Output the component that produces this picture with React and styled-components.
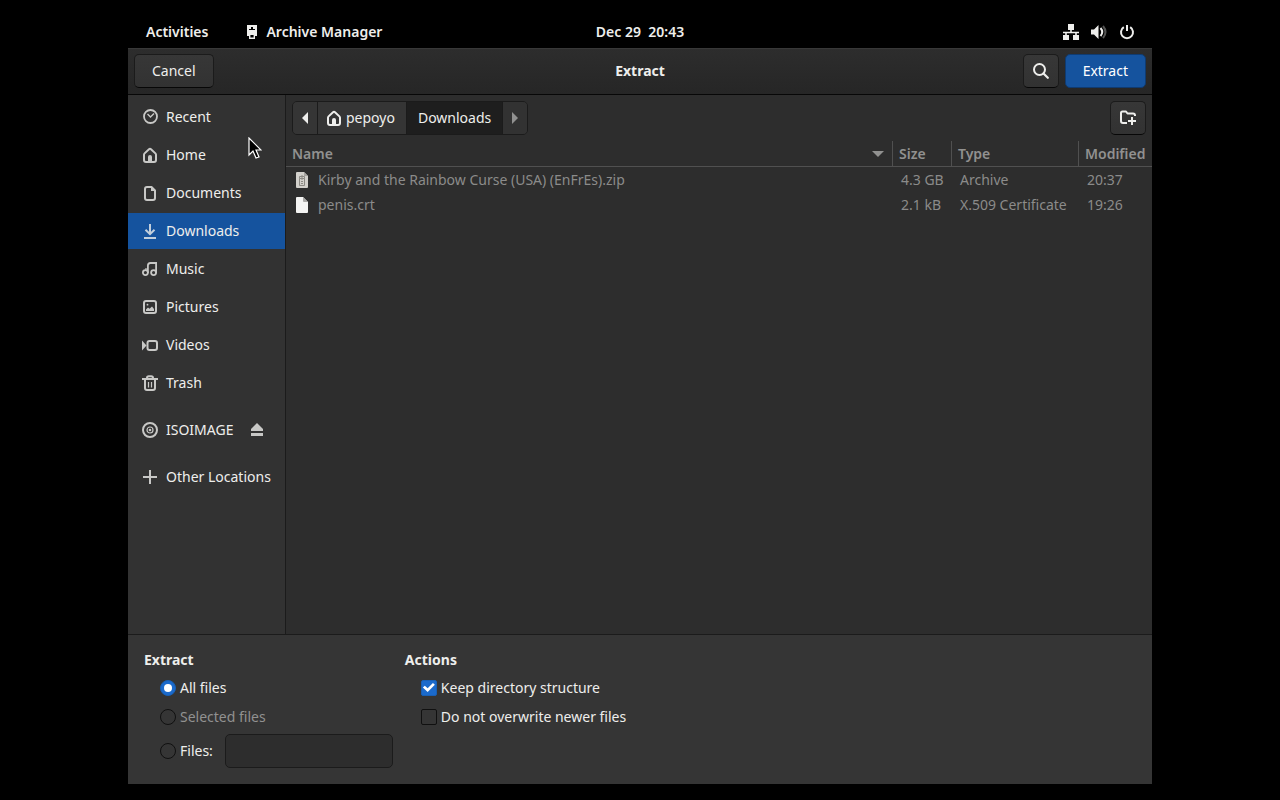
import React, { useState } from 'react'
import styled, { createGlobalStyle, css } from 'styled-components'

const App = () => {
  const [place, setPlace] = useState('Downloads')
  const [mode, setMode] = useState('all')
  const [pattern, setPattern] = useState('')

  return (
    <>
      <GlobalStyle />
      <Screen>
        <TopBar>
          <TopBarSide>
            <TopBarButton>Activities</TopBarButton>
            <TopBarButton>
              <ArchiveIcon />
              Archive Manager
            </TopBarButton>
          </TopBarSide>
          <Clock>Dec 29&nbsp; 20:43</Clock>
          <SystemMenu aria-label='System menu'>
            <NetworkIcon />
            <VolumeIcon />
            <PowerIcon />
          </SystemMenu>
        </TopBar>

        <Dialog>
          <HeaderBar>
            <HeaderSide>
              <Button>Cancel</Button>
            </HeaderSide>
            <DialogTitle>Extract</DialogTitle>
            <HeaderSide $end>
              <IconButton aria-label='Search'><SearchIcon /></IconButton>
              <Button $suggested>Extract</Button>
            </HeaderSide>
          </HeaderBar>

          <Body>
            <Sidebar>
              {places.map(({ name, icon: Icon, separated, ejectable }) => (
                <Place key={name} $selected={name === place} $separated={separated}>
                  <PlaceLink href='#' onClick={() => setPlace(name)}>
                    <Icon />
                    {name}
                  </PlaceLink>
                  {ejectable && (
                    <EjectButton aria-label='Eject'><EjectIcon /></EjectButton>
                  )}
                </Place>
              ))}
            </Sidebar>

            <Browser>
              <PathRow>
                <PathBar>
                  <PathButton $arrow aria-label='Back'><ArrowIcon d='M7 1v12L1 7z' /></PathButton>
                  <PathButton><HomeIcon /> pepoyo</PathButton>
                  <PathButton $current>Downloads</PathButton>
                  <PathButton $arrow disabled aria-label='Forward'><ArrowIcon d='M1 1v12l6-6z' /></PathButton>
                </PathBar>
                <IconButton aria-label='Create folder'><NewFolderIcon /></IconButton>
              </PathRow>

              <FileTable>
                <thead>
                  <tr>
                    <HeadCell>
                      <SortLabel>
                        Name
                        <svg width='12' height='6' viewBox='0 0 12 6'><path fill='currentColor' d='M0 0h12L6 6z' /></svg>
                      </SortLabel>
                    </HeadCell>
                    <HeadCell $width={59}>Size</HeadCell>
                    <HeadCell $width={127}>Type</HeadCell>
                    <HeadCell $width={74}>Modified</HeadCell>
                  </tr>
                </thead>
                <tbody>
                  {files.map(({ name, icon: Icon, size, type, modified }) => (
                    <tr key={name}>
                      <Cell>
                        <FileName><Icon />{name}</FileName>
                      </Cell>
                      <Cell>{size}</Cell>
                      <Cell>{type}</Cell>
                      <Cell>{modified}</Cell>
                    </tr>
                  ))}
                </tbody>
              </FileTable>
            </Browser>
          </Body>

          <Options>
            <Group>
              <GroupTitle>Extract</GroupTitle>
              <Choice>
                <Radio name='mode' checked={mode === 'all'} onChange={() => setMode('all')} />
                All files
              </Choice>
              <Choice $disabled>
                <Radio name='mode' disabled />
                Selected files
              </Choice>
              <FilesRow>
                <Choice>
                  <Radio name='mode' checked={mode === 'files'} onChange={() => setMode('files')} />
                  Files:
                </Choice>
                <Entry
                  aria-label='Files'
                  value={pattern}
                  onChange={(e) => setPattern(e.target.value)}
                />
              </FilesRow>
            </Group>
            <Group>
              <GroupTitle>Actions</GroupTitle>
              <Choice>
                <Checkbox defaultChecked />
                Keep directory structure
              </Choice>
              <Choice>
                <Checkbox />
                Do not overwrite newer files
              </Choice>
            </Group>
          </Options>
        </Dialog>

        <Pointer width='14' height='22' viewBox='0 0 14 22'>
          <path
            d='M1 1v17l4-4 3 7 3-1-3-7h5z'
            fill='#000'
            stroke='#fff'
            strokeWidth='1.2'
          />
        </Pointer>
      </Screen>
    </>
  )
}

// symbolic icons, all on a 16px grid
const Symbolic = ({ children, ...props }) => (
  <svg
    width='16'
    height='16'
    viewBox='0 0 16 16'
    fill='none'
    stroke='currentColor'
    strokeWidth='2'
    aria-hidden='true'
    {...props}
  >
    {children}
  </svg>
)

const RecentIcon = () => (
  <Symbolic>
    <circle cx='8.5' cy='7.5' r='6.5' strokeWidth='1.8' />
    <path strokeWidth='1.4' d='M5.5 5l3 3L12 4.5' />
  </Symbolic>
)

const HomeIcon = () => (
  <Symbolic>
    <path
      strokeLinejoin='round'
      d='M2 13V7.8q0-.8.6-1.400L7 2.200q1-.9 2 0l4.400 4.200q.6.6.6 1.400V13q0 2-2 2H4q-2 0-2-2z'
    />
    <path fill='currentColor' stroke='none' d='M6 15v-5q0-2 2-2t2 2v5z' />
  </Symbolic>
)

const DocumentIcon = () => (
  <Symbolic>
    <path strokeLinejoin='round' d='M3 4q0-2 2-2h4.500L13 5.500V13q0 2-2 2H5q-2 0-2-2z' />
    <path fill='currentColor' stroke='none' d='M9 2l4 4H9z' />
  </Symbolic>
)

const DownloadIcon = () => (
  <Symbolic>
    <path d='M8 1v10M3.500 6.800L8 11.200l4.500-4.400M2 15h12' />
  </Symbolic>
)

const MusicIcon = () => (
  <Symbolic strokeWidth='1.8'>
    <circle cx='3.4' cy='11.6' r='2.5' />
    <circle cx='11.6' cy='11.6' r='2.5' />
    <path d='M5.900 12V4.500q0-2.500 2.500-2.500h5.700v10' />
    <path strokeWidth='1.200' d='M3 8h3' />
  </Symbolic>
)

const PictureIcon = () => (
  <Symbolic>
    <rect x='2' y='2' width='12' height='12' rx='2' />
    <path fill='currentColor' stroke='none' d='M4 12v-1.500l2-2 1.500 1.300L10 7.500l2 2.500v2z' />
    <circle cx='5.5' cy='5.7' r='0.9' fill='currentColor' stroke='none' />
  </Symbolic>
)

const VideoIcon = () => (
  <Symbolic>
    <rect x='5.5' y='4' width='9.5' height='9' rx='2' />
    <path fill='currentColor' stroke='none' d='M0 3.500l4.500 5-4.500 5z' />
  </Symbolic>
)

const TrashIcon = () => (
  <Symbolic>
    <path d='M0 4h16M5 4V3q0-1.800 1.800-1.800h2.400Q11 1.200 11 3v1M3 4v9q0 2 2 2h6q2 0 2-2V4' />
    <path strokeWidth='1.2' d='M6.500 7v5.500M9.500 7v5.500' />
  </Symbolic>
)

const DiscIcon = () => (
  <Symbolic>
    <circle cx='8' cy='8' r='7' />
    <circle cx='8' cy='8' r='3' strokeWidth='1.2' />
    <circle cx='8' cy='8' r='1.3' fill='currentColor' stroke='none' />
  </Symbolic>
)

const PlusIcon = () => (
  <Symbolic>
    <path d='M8 1v14M1 8h14' />
  </Symbolic>
)

const EjectIcon = () => (
  <Symbolic fill='currentColor'>
    <path stroke='none' d='M8 1l6 6v2H2V7z' />
    <path d='M2 12.500h12' strokeWidth='3' />
  </Symbolic>
)

const SearchIcon = () => (
  <Symbolic>
    <circle cx='6.5' cy='6.5' r='5.5' />
    <path strokeLinecap='round' strokeWidth='2.2' d='M10.500 10.500l4.300 4.300' />
  </Symbolic>
)

const NewFolderIcon = () => (
  <Symbolic>
    <path strokeLinejoin='round' d='M7 13H3q-2 0-2-2V3q0-1.500 1.500-1.500H6L7.500 3.500H13q2 0 2 2V6' />
    <path d='M12 7v8M8 11h8' />
  </Symbolic>
)

const ArchiveIcon = () => (
  <Symbolic>
    <path fill='currentColor' stroke='none' fillRule='evenodd' d='M3 1h10v11h-2V8H5v4H3zM7 3v2H5v1h6V5H9V3z' />
    <path strokeWidth='1.400' d='M5.700 9.700h4.600v4.600H5.700z' />
    <path fill='currentColor' stroke='none' d='M5 7h6v4H5z' />
  </Symbolic>
)

const NetworkIcon = () => (
  <Symbolic fill='currentColor' strokeWidth='1.6'>
    <path stroke='none' d='M5 0h6v6H5zM0 11h6v5H0zM10 11h6v5h-6z' />
    <path fill='none' d='M8 5v3.500M0 8.500h16M3 8v3M13 8v3' />
  </Symbolic>
)

const VolumeIcon = () => (
  <Symbolic>
    <path fill='currentColor' stroke='none' d='M0 5.500h3L7.500 1v14L3 10.500H0z' />
    <path d='M9.500 4q3.500 4 0 8' />
    <path opacity='0.35' d='M12 2q5 6 0 12' />
  </Symbolic>
)

const PowerIcon = () => (
  <Symbolic>
    <path d='M8 1v6M4.800 3.200a6 6 0 1 0 6.400 0' />
  </Symbolic>
)

const ArrowIcon = ({ d }) => (
  <svg width='8' height='14' viewBox='0 0 8 14' aria-hidden='true'>
    <path fill='currentColor' d={d} />
  </svg>
)

const ZipFileIcon = () => (
  <svg width='16' height='16' viewBox='0 0 16 16' aria-hidden='true'>
    <path fill='#d2d0cb' d='M3 0h7l4 4v11q0 1-1 1H3q-1 0-1-1V1q0-1 1-1z' />
    <path fill='#a5a39f' d='M10 0l4 4h-4z' />
    <path fill='none' stroke='#8b8983' d='M5.500 6.500h5v7h-5zM8 3v5M7 9.500h2M7 11.500h2M5.500 6.500v-2h5v2' />
  </svg>
)

const PlainFileIcon = () => (
  <svg width='16' height='16' viewBox='0 0 16 16' aria-hidden='true'>
    <path fill='#f4f4f3' d='M3 0h6l5 5v10q0 1-1 1H3q-1 0-1-1V1q0-1 1-1z' />
    <path fill='#aaa9a7' d='M9 0l5 5h-4q-1 0-1-1z' />
  </svg>
)

const places = [
  { name: 'Recent', icon: RecentIcon },
  { name: 'Home', icon: HomeIcon },
  { name: 'Documents', icon: DocumentIcon },
  { name: 'Downloads', icon: DownloadIcon },
  { name: 'Music', icon: MusicIcon },
  { name: 'Pictures', icon: PictureIcon },
  { name: 'Videos', icon: VideoIcon },
  { name: 'Trash', icon: TrashIcon },
  { name: 'ISOIMAGE', icon: DiscIcon, separated: true, ejectable: true },
  { name: 'Other Locations', icon: PlusIcon, separated: true }
]

const files = [
  {
    name: 'Kirby and the Rainbow Curse (USA) (EnFrEs).zip',
    icon: ZipFileIcon,
    size: '4.3 GB',
    type: 'Archive',
    modified: '20:37'
  },
  {
    name: 'penis.crt',
    icon: PlainFileIcon,
    size: '2.1 kB',
    type: 'X.509 Certificate',
    modified: '19:26'
  }
]

const GlobalStyle = createGlobalStyle`
  * {
    box-sizing: border-box;
  }

  body {
    margin: 0;
    background: #000;
    color: #eeeeec;
    font: 14px/20px 'Noto Sans', 'Open Sans', sans-serif;
  }

  button,
  input {
    color: inherit;
    font: inherit;
  }

  svg {
    display: block;
    flex: none;
  }
`

const Screen = styled.div`
  position: relative;
  display: flex;
  flex-direction: column;
  width: 80%;
  min-height: calc(100vh - 32px);
  margin: 16px auto;
`

const TopBar = styled.header`
  display: grid;
  grid-template-columns: 1fr auto 1fr;
  align-items: center;
  height: 32px;
  padding: 0 6px;
  font-weight: 600;
`

const TopBarSide = styled.div`
  display: flex;
  gap: 12px;
`

const plainButton = css`
  display: flex;
  align-items: center;
  padding: 0;
  border: 0;
  background: none;
`

const TopBarButton = styled.button`
  ${plainButton}
  gap: 6px;
  padding: 0 12px;
`

const Clock = styled.time`
  white-space: nowrap;
`

const SystemMenu = styled.button`
  ${plainButton}
  gap: 12px;
  justify-self: end;
  padding: 0 11px;
`

const Dialog = styled.main`
  display: flex;
  flex: 1;
  flex-direction: column;
  background: #353535;
`

const HeaderBar = styled.div`
  display: grid;
  grid-template-columns: 1fr auto 1fr;
  align-items: center;
  height: 47px;
  padding: 0 6px 1px;
  border-top: 1px solid #383838;
  border-bottom: 1px solid #070707;
  background: linear-gradient(#2d2d2d, #262626);
`

const HeaderSide = styled.div`
  display: flex;
  gap: 6px;
  justify-content: ${({ $end }) => $end ? 'flex-end' : 'flex-start'};
`

const DialogTitle = styled.h1`
  margin: 0;
  font-size: 14px;
  font-weight: 700;
`

const Button = styled.button`
  display: flex;
  align-items: center;
  justify-content: center;
  height: 34px;
  padding: 0 17px;
  border: 1px solid #1b1b1b;
  border-bottom-color: #070707;
  border-radius: 5px;
  background: linear-gradient(#373737, #323232);

  ${({ $suggested }) => $suggested && css`
    border-color: #0f3b71;
    background: #15539e;
    color: #fff;
  `}
`

const IconButton = styled(Button)`
  width: 36px;
  padding: 0;
`

const Body = styled.div`
  display: flex;
  flex: 1;
`

const Sidebar = styled.nav`
  display: flex;
  flex: none;
  flex-direction: column;
  gap: 2px;
  width: 158px;
  padding-top: 4px;
  border-right: 1px solid #1b1b1b;
  background: #323232;
`

const Place = styled.div`
  display: flex;
  align-items: center;
  height: 36px;
  padding: 0 14px;
  margin-top: ${({ $separated }) => $separated ? '9px' : 0};
  background: ${({ $selected }) => $selected ? '#15539e' : 'none'};
`

const PlaceLink = styled.a`
  display: flex;
  flex: 1;
  align-items: center;
  gap: 8px;
  color: inherit;
  text-decoration: none;
  white-space: nowrap;

  svg {
    opacity: 0.8;
  }
`

const EjectButton = styled.button`
  ${plainButton}
  margin-right: 6px;
  opacity: 0.8;
`

const Browser = styled.section`
  flex: 1;
  min-width: 0;
  background: #2d2d2d;
`

const PathRow = styled.div`
  display: flex;
  align-items: center;
  justify-content: space-between;
  height: 46px;
  padding: 0 6px;
`

const PathBar = styled.div`
  display: flex;
  height: 34px;
  border: 1px solid #1b1b1b;
  border-radius: 5px;
  overflow: hidden;
`

const PathButton = styled.button`
  display: flex;
  align-items: center;
  gap: 4px;
  padding: 0 11px 0 8px;
  border: 0;
  border-right: 1px solid #1b1b1b;
  background: #353535;

  ${({ $arrow }) => $arrow && css`
    padding: 0 8px;
  `}

  ${({ $current }) => $current && css`
    padding: 0 11px;
    background: #1e1e1e;
  `}

  &:disabled {
    color: #919190;
    background: #323232;
  }

  &:last-child {
    border-right: 0;
  }
`

const FileTable = styled.table`
  width: 100%;
  border-collapse: separate;
  border-spacing: 0;
  table-layout: fixed;
  color: #8b8b8a;
  white-space: nowrap;
`

const HeadCell = styled.th`
  width: ${({ $width }) => $width ? `${$width}px` : 'auto'};
  height: 26px;
  padding: 0 6px;
  border-bottom: 1px solid #505050;
  color: #919190;
  font-weight: 600;
  text-align: left;

  & + & {
    border-left: 1px solid #505050;
  }
`

const SortLabel = styled.div`
  display: flex;
  align-items: center;
  justify-content: space-between;
  padding-right: 2px;
`

const Cell = styled.td`
  height: 25px;
  padding: 0 8px;

  & + & {
    padding-left: 9px;
  }
`

const FileName = styled.div`
  display: flex;
  align-items: center;
  gap: 8px;
`

const Options = styled.form`
  display: flex;
  gap: 12px;
  padding: 15px 16px 16px;
  border-top: 1px solid #1b1b1b;
`

const Group = styled.div`
  display: flex;
  flex-direction: column;
  gap: 6px;
`

const GroupTitle = styled.h2`
  margin: 0;
  font-size: 14px;
  font-weight: 700;
  line-height: 20px;
`

const Choice = styled.label`
  display: flex;
  align-items: center;
  gap: 4px;
  height: 23px;
  padding-left: 16px;
  color: ${({ $disabled }) => $disabled ? '#919190' : 'inherit'};
`

const FilesRow = styled.div`
  display: flex;
  align-items: center;
  gap: 12px;
`

const toggle = css`
  display: grid;
  place-items: center;
  width: 16px;
  height: 16px;
  margin: 0;
  border: 1px solid #101010;
  background: #353535;
  appearance: none;

  &:checked {
    border-color: #185fb4;
    background: #1b6acb;
  }

  &:checked::before {
    content: '';
    background: #fff;
  }
`

const Radio = styled.input.attrs({ type: 'radio' })`
  ${toggle}
  border-radius: 50%;

  &::before {
    width: 8px;
    height: 8px;
    border-radius: 50%;
  }
`

const Checkbox = styled.input.attrs({ type: 'checkbox' })`
  ${toggle}
  border-radius: 2px;

  &::before {
    width: 12px;
    height: 10px;
    clip-path: polygon(0 50%, 16% 32%, 40% 58%, 84% 4%, 100% 22%, 40% 96%);
  }
`

const Entry = styled.input`
  width: 168px;
  height: 34px;
  padding: 0 8px;
  border: 1px solid #1b1b1b;
  border-radius: 5px;
  background: #2d2d2d;
`

const Pointer = styled.svg`
  position: absolute;
  top: 121px;
  left: 120px;
  pointer-events: none;
`

export default App
